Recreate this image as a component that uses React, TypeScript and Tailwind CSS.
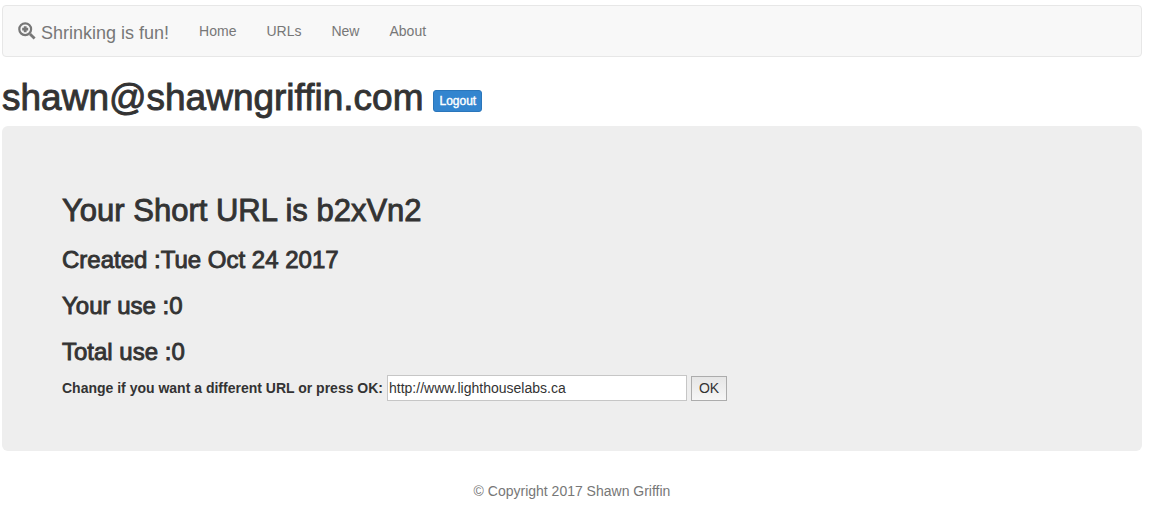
import { useState } from "react";

const links = ["Home", "URLs", "New", "About"];

const stats = [
  { label: "Created", value: "Tue Oct 24 2017" },
  { label: "Your use", value: "0" },
  { label: "Total use", value: "0" },
];

function ZoomInIcon() {
  return (
    <svg viewBox="0 0 18 18" className="size-[18px] shrink-0" aria-hidden="true">
      <circle cx="7.2" cy="7.2" r="5.9" fill="none" stroke="#777777" strokeWidth="2.2" />
      <path d="M12 12l4.6 4.6" stroke="#777777" strokeWidth="2.8" />
      <path d="M5.8 4.2h2.8v1.6h1.6v2.8H8.6v1.6H5.8V8.6H4.2V5.8h1.6z" fill="#777777" />
    </svg>
  );
}

function NavBar() {
  return (
    <nav className="flex h-[52px] items-center gap-[30px] rounded border border-[#e7e7e7] bg-[#f8f8f8] px-[15px] text-[#777777]">
      <a href="#" className="flex items-center gap-[5px] text-lg leading-5">
        <ZoomInIcon />
        <span className="pt-1">Shrinking is fun!</span>
      </a>
      <ul className="flex gap-[30px]">
        {links.map((link) => (
          <li key={link}>
            <a href="#">{link}</a>
          </li>
        ))}
      </ul>
    </nav>
  );
}

export default function App() {
  const [url, setUrl] = useState("http://www.lighthouselabs.ca");

  return (
    <div className="bg-white pt-[5px] pr-[9px] pl-[2px] font-['Liberation_Sans',Arial,sans-serif] text-sm leading-5 text-[#333333]">
      <NavBar />
      <header className="mt-[21px] mb-2 flex items-end gap-[10px]">
        <h1 className="text-[37px] leading-10 [-webkit-text-stroke:0.9px_#333333]">shawn@shawngriffin.com</h1>
        <button
          type="button"
          className="mb-[6px] rounded-[3px] border border-[#2a76bb] bg-[#3385cf] px-[5px] text-xs leading-5 text-white [-webkit-text-stroke:0.4px_white]"
        >
          Logout
        </button>
      </header>
      <main className="rounded-md bg-[#eeeeee] px-[60px] pt-[68px] pb-[50px]">
        <h2 className="text-[31px] leading-[33px] [-webkit-text-stroke:0.9px_#333333]">Your Short URL is b2xVn2</h2>
        {stats.map(({ label, value }) => (
          <h3 key={label} className="mt-5 text-2xl leading-[26px] [-webkit-text-stroke:0.9px_#333333]">
            {label} :{value}
          </h3>
        ))}
        <form className="mt-[10px] flex items-center gap-1" onSubmit={(e) => e.preventDefault()}>
          <label htmlFor="url" className="font-bold">
            Change if you want a different URL or press OK:
          </label>
          <input
            id="url"
            type="text"
            value={url}
            onChange={(e) => setUrl(e.target.value)}
            className="h-[26px] w-[300px] border border-[#c6c6c6] bg-white px-px"
          />
          <button
            type="submit"
            className="h-[25px] w-9 border border-[#acacac] bg-linear-to-b from-[#e6e6e6] to-[#f6f6f6]"
          >
            OK
          </button>
        </form>
      </main>
      <footer className="mt-[30px] text-center text-[#777777]">© Copyright 2017 Shawn Griffin</footer>
    </div>
  );
}
